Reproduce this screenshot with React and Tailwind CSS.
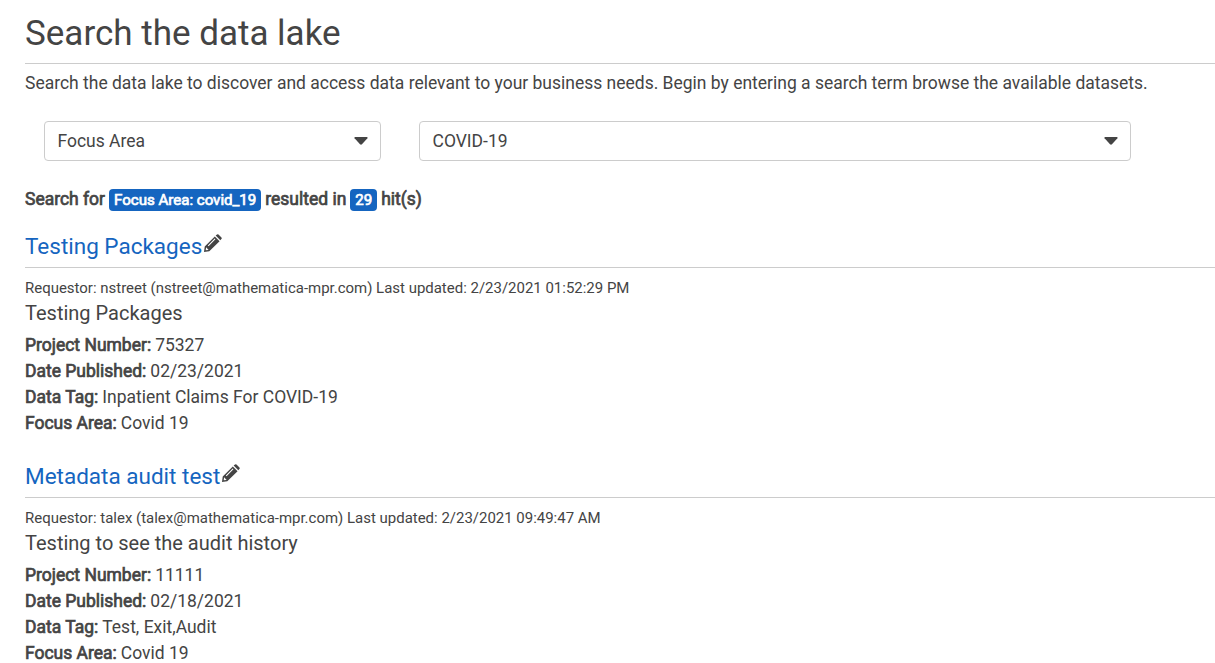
const PENCIL = (
  <svg viewBox="0 0 17 17" className="ml-[2px] mt-[5px] h-[18px] w-[18px]" fill="#444">
    <path
      fillRule="evenodd"
      d="M12.3.4Q13-.1 13.7.4L16.5 3.2Q17.1 3.9 16.6 4.6L15.4 5.9 11 1.5zM10.2 2.3 14.7 6.8 5 16.3 0 17 .7 11.8zM10.1 4.3 3.6 10.8 4.3 11.5 10.8 5zM2 12.6 1.6 15.4 4.4 15z"
    />
  </svg>
);

const results = [
  {
    title: "Testing Packages",
    meta: "Requestor: nstreet (nstreet@mathematica-mpr.com) Last updated: 2/23/2021 01:52:29 PM",
    description: "Testing Packages",
    fields: [
      ["Project Number:", "75327"],
      ["Date Published:", "02/23/2021"],
      ["Data Tag:", "Inpatient Claims For COVID-19"],
      ["Focus Area:", "Covid 19"],
    ],
  },
  {
    title: "Metadata audit test",
    meta: "Requestor: talex (talex@mathematica-mpr.com) Last updated: 2/23/2021 09:49:47 AM",
    description: "Testing to see the audit history",
    fields: [
      ["Project Number:", "11111"],
      ["Date Published:", "02/18/2021"],
      ["Data Tag:", "Test, Exit,Audit"],
      ["Focus Area:", "Covid 19"],
    ],
  },
];

function Select({ label, className }) {
  return (
    <button className={"flex h-10 items-center justify-between rounded border border-[#ccc] pl-[12.5px] pr-3 " + className}>
      <span className="leading-[26px]">{label}</span>
      <svg viewBox="0 0 14 8" className="h-2 w-3.5" fill="#444">
        <path d="M1 0H13Q14 .5 13.4 1.3L8 7.3Q7 8 6 7.3L.6 1.3Q0 .5 1 0Z" />
      </svg>
    </button>
  );
}

function Badge({ children }) {
  return <span className="mt-px rounded bg-[#1565c0] px-[5px] text-[15.05px] leading-[22px] text-white">{children}</span>;
}

function Result({ item }) {
  return (
    <section className="mb-6">
      <h2 className="-mt-px flex h-[39px] border-b border-[#ccc] text-[22.5px] leading-[34px] text-[#1565c0]">
        <a className="whitespace-nowrap">{item.title}</a>
        {PENCIL}
      </h2>
      <p className="mt-[9px] text-[14.98px] leading-[22px]">{item.meta}</p>
      <p className="text-[20px] leading-[28px]">{item.description}</p>
      <dl className="mt-[5px]">
        {item.fields.map(([k, v]) => (
          <div key={k} className="flex gap-1 leading-[26px]">
            <dt className="[-webkit-text-stroke:0.7px]">{k}</dt>
            <dd>{v}</dd>
          </div>
        ))}
      </dl>
    </section>
  );
}

export default function App() {
  return (
    <main className="h-[663px] overflow-hidden bg-white pl-[25px] font-[Roboto,sans-serif] text-[17.49px] text-[#444]">
      <h1 className="h-16 border-b border-[#ccc] pt-[9px] text-[35px] leading-[50px]">Search the data lake</h1>
      <p className="mt-[6px] leading-[26px]">
        Search the data lake to discover and access data relevant to your business needs. Begin by entering a search term browse the available datasets.
      </p>
      <div className="mt-[25px] flex gap-[38px] pl-[19px]">
        <Select label="Focus Area" className="w-[337px]" />
        <Select label="COVID-19" className="w-[712px]" />
      </div>
      <div className="mb-[18px] mt-[25px] flex h-[26px] items-center gap-1 whitespace-nowrap [-webkit-text-stroke:0.7px]">
        <span>Search for</span>
        <Badge>Focus Area: covid_19</Badge>
        <span>resulted in</span>
        <Badge>29</Badge>
        <span>hit(s)</span>
      </div>
      {results.map((r) => (
        <Result key={r.title} item={r} />
      ))}
    </main>
  );
}
